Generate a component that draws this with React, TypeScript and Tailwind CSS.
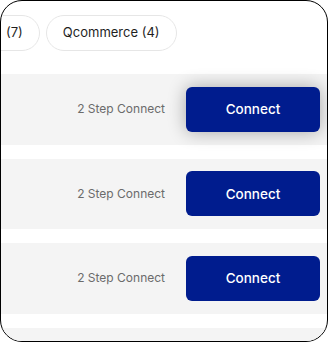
import React from "react";

const font = { fontFamily: "Inter, 'Noto Sans', sans-serif" };

function Row({ hover }: { hover?: boolean }) {
  return (
    <div className="flex h-[70.5px] shrink-0 items-center justify-end gap-[21px] bg-[#f4f4f4] pr-[7px]">
      <span className="text-[12px] text-[#6b6b6b]">2 Step Connect</span>
      <button
        className={
          "h-[45px] w-[134px] rounded-[6px] bg-[#001c8e] text-[13.5px] font-medium text-white " +
          (hover ? "shadow-[0_0_18px_rgba(0,0,0,0.32)]" : "")
        }
      >
        Connect
      </button>
    </div>
  );
}

export default function App() {
  return (
    <div
      style={font}
      className="relative h-[342px] w-[328px] overflow-hidden rounded-[22px] border border-black bg-white"
    >
      <div className="flex gap-[6px] pt-[14px]">
        <div className="ml-[-36px] flex h-[36px] items-center rounded-full border border-[#e6e6e6] pl-[40px] pr-[16px] text-[13px] text-[#1f1f1f]">
          (7)
        </div>
        <div className="flex h-[36px] items-center rounded-full border border-[#e6e6e6] px-[16px] text-[13px] text-[#1f1f1f]">
          Qcommerce (4)
        </div>
      </div>
      <div className="mt-[23px] flex flex-col gap-[14px]">
        <Row hover />
        <Row />
        <Row />
        <div className="h-[70.5px] shrink-0 bg-[#f4f4f4]" />
      </div>
    </div>
  );
}
